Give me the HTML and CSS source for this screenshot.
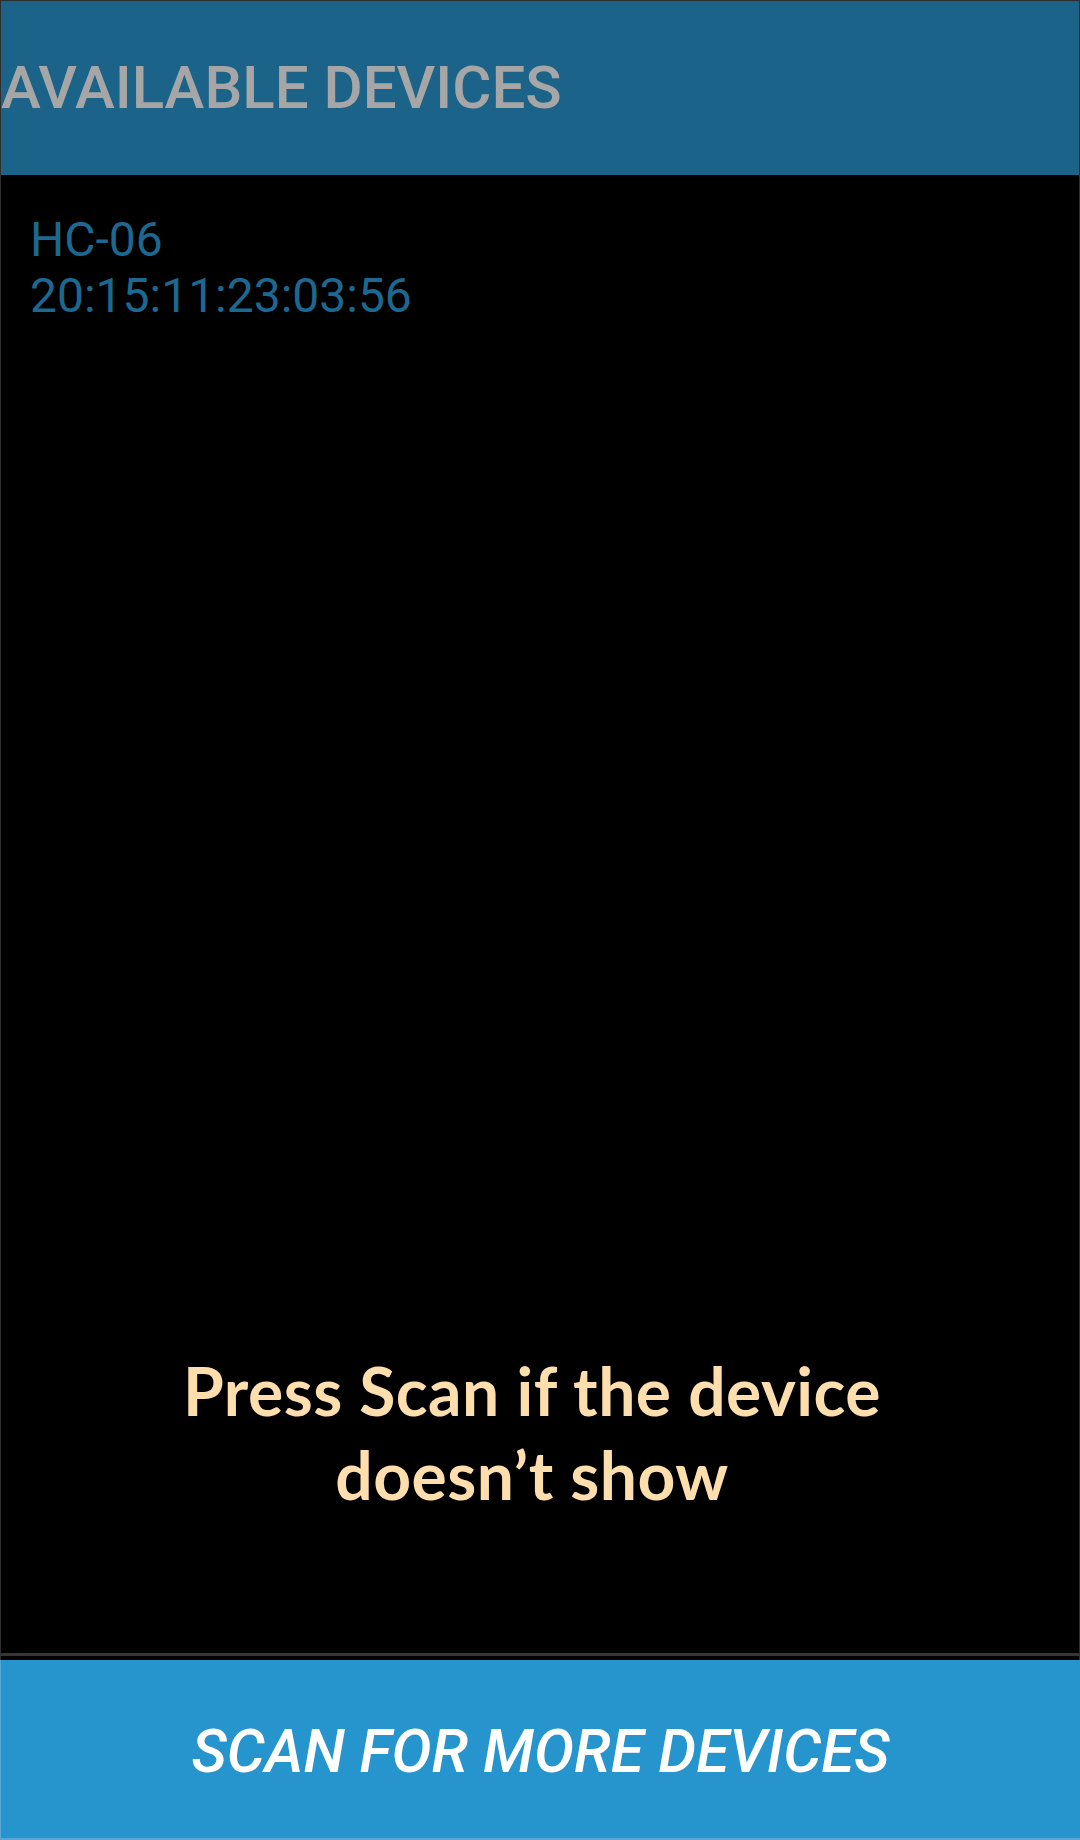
FILE: index.html
```html
<!DOCTYPE html>
<html>
<head>
<meta charset="utf-8">
<title>Available Devices</title>
<link rel="stylesheet" href="styles.css">
</head>
<body>
<div class="screen">
  <header class="title-bar">
    <h1 class="title">AVAILABLE DEVICES</h1>
  </header>
  <main class="content">
    <ul class="device-list">
      <li class="device">
        <span class="device-name">HC-06</span>
        <span class="device-address">20:15:11:23:03:56</span>
      </li>
    </ul>
    <p class="hint">Press Scan if the device<br>doesn’t show</p>
  </main>
  <div class="divider"></div>
  <button class="scan-button">SCAN FOR MORE DEVICES</button>
</div>
</body>
</html>
```

FILE: styles.css
```css
html, body {
  margin: 0;
  padding: 0;
  background: #000;
}

.screen {
  width: 1080px;
  height: 1840px;
  box-sizing: border-box;
  border-top: 1px solid #2f2f2f;
  border-left: 1px solid #2f2f2f;
  border-right: 1px solid #2f2f2f;
  display: flex;
  flex-direction: column;
  background: #000;
  font-family: Roboto, "Liberation Sans", sans-serif;
}

.title-bar {
  height: 174px;
  flex: none;
  background: #1b6388;
  display: flex;
  align-items: center;
  padding-left: 0;
}

.title {
  margin: 0;
  font-size: 60px;
  font-weight: 500;
  color: #a6a6a6;
  line-height: 1;
  letter-spacing: 0;
}

.content {
  flex: 1;
  display: flex;
  flex-direction: column;
  min-height: 0;
}

.device-list {
  list-style: none;
  margin: 0;
  padding: 37px 0 0 29px;
}

.device {
  display: flex;
  flex-direction: column;
  font-size: 48px;
  line-height: 56px;
  color: #1c6890;
}

.hint {
  margin: auto 0 0 0;
  padding: 0 16px 136px 0;
  text-align: center;
  font-family: Lato, "Open Sans", sans-serif;
  font-weight: 700;
  font-size: 66px;
  line-height: 84px;
  letter-spacing: 0.5px;
  color: #ffdead;
}

.divider {
  flex: none;
  height: 3px;
  background: #363636;
  margin-bottom: 4px;
}

.scan-button {
  flex: none;
  height: 180px;
  margin: 0 -1px;
  border: none;
  border-left: 1px solid #5aa6d6;
  border-bottom: 2px solid #5aa6d6;
  background: #2795cd;
  color: #fff;
  font-family: Roboto, "Liberation Sans", sans-serif;
  font-style: italic;
  font-weight: 500;
  font-size: 60px;
  padding: 4px 0 0 0;
  text-align: center;
}
```
